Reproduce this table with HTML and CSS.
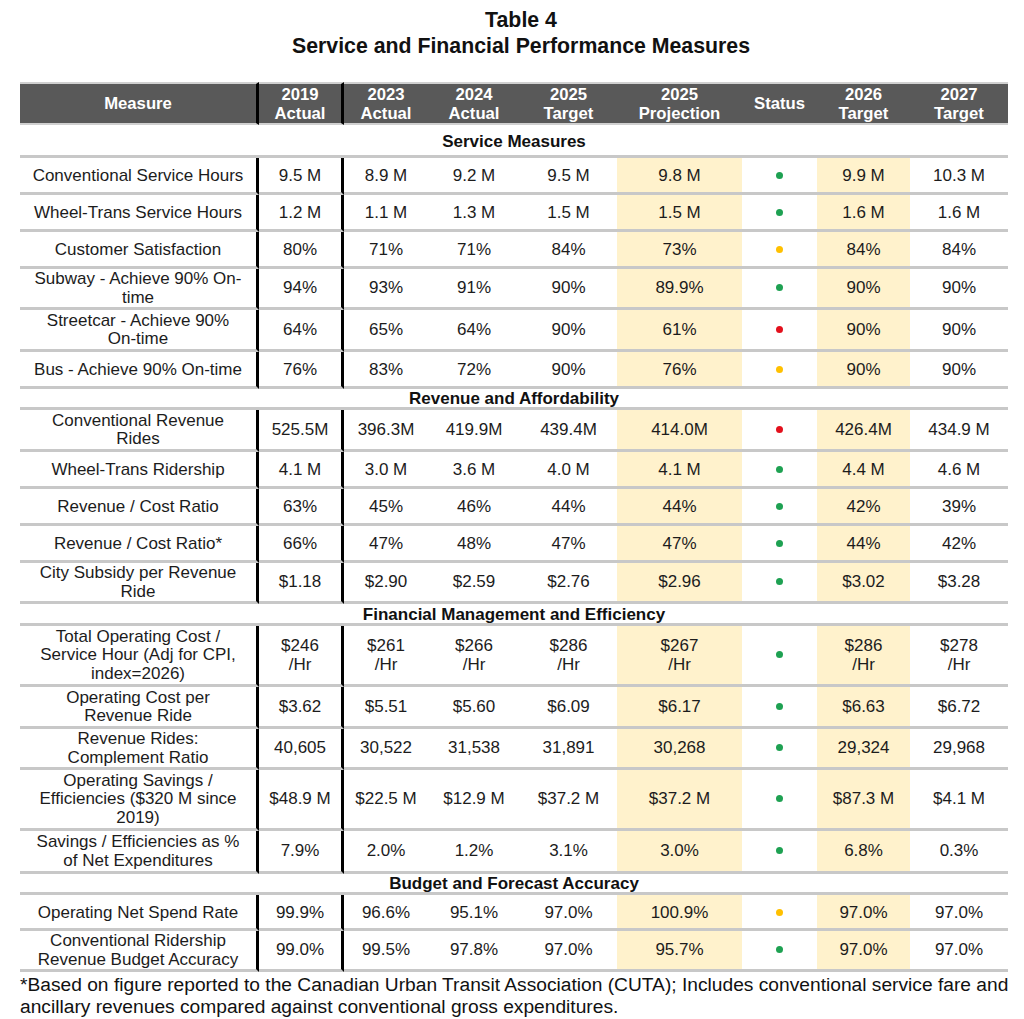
FILE: index.html
```html
<!DOCTYPE html>
<html>
<head>
<meta charset="utf-8">
<title>Table 4</title>
<link rel="stylesheet" href="styles.css">
</head>
<body>
<div class="page">
  <h1 class="title">Table 4<br>Service and Financial Performance Measures</h1>
  <table class="perf">
    <colgroup>
      <col class="w-measure"><col class="w-2019"><col class="w-2023"><col class="w-2024"><col class="w-2025t"><col class="w-proj"><col class="w-status"><col class="w-2026"><col class="w-2027">
    </colgroup>
    <thead>
      <tr>
        <th class="vb">Measure</th>
        <th class="vb">2019<br>Actual</th>
        <th>2023<br>Actual</th>
        <th>2024<br>Actual</th>
        <th>2025<br>Target</th>
        <th>2025<br>Projection</th>
        <th>Status</th>
        <th>2026<br>Target</th>
        <th>2027<br>Target</th>
      </tr>
    </thead>
    <tbody>
      <tr class="sec sec-first"><td colspan="9">Service Measures</td></tr>
      <tr class="h37"><td class="vb">Conventional Service Hours</td><td class="vb">9.5 M</td><td>8.9 M</td><td>9.2 M</td><td>9.5 M</td><td class="hl">9.8 M</td><td><span class="dot g"></span></td><td class="hl">9.9 M</td><td>10.3 M</td></tr>
      <tr class="h37"><td class="vb">Wheel-Trans Service Hours</td><td class="vb">1.2 M</td><td>1.1 M</td><td>1.3 M</td><td>1.5 M</td><td class="hl">1.5 M</td><td><span class="dot g"></span></td><td class="hl">1.6 M</td><td>1.6 M</td></tr>
      <tr class="h37"><td class="vb">Customer Satisfaction</td><td class="vb">80%</td><td>71%</td><td>71%</td><td>84%</td><td class="hl">73%</td><td><span class="dot y"></span></td><td class="hl">84%</td><td>84%</td></tr>
      <tr class="h40"><td class="vb">Subway - Achieve 90% On-<br>time</td><td class="vb">94%</td><td>93%</td><td>91%</td><td>90%</td><td class="hl">89.9%</td><td><span class="dot g"></span></td><td class="hl">90%</td><td>90%</td></tr>
      <tr class="h42"><td class="vb">Streetcar - Achieve 90%<br>On-time</td><td class="vb">64%</td><td>65%</td><td>64%</td><td>90%</td><td class="hl">61%</td><td><span class="dot r"></span></td><td class="hl">90%</td><td>90%</td></tr>
      <tr class="h37"><td class="vb">Bus - Achieve 90% On-time</td><td class="vb">76%</td><td>83%</td><td>72%</td><td>90%</td><td class="hl">76%</td><td><span class="dot y"></span></td><td class="hl">90%</td><td>90%</td></tr>
      <tr class="sec"><td colspan="9">Revenue and Affordability</td></tr>
      <tr class="h42"><td class="vb">Conventional Revenue<br>Rides</td><td class="vb">525.5M</td><td>396.3M</td><td>419.9M</td><td>439.4M</td><td class="hl">414.0M</td><td><span class="dot r"></span></td><td class="hl">426.4M</td><td>434.9 M</td></tr>
      <tr class="h37"><td class="vb">Wheel-Trans Ridership</td><td class="vb">4.1 M</td><td>3.0 M</td><td>3.6 M</td><td>4.0 M</td><td class="hl">4.1 M</td><td><span class="dot g"></span></td><td class="hl">4.4 M</td><td>4.6 M</td></tr>
      <tr class="h37"><td class="vb">Revenue / Cost Ratio</td><td class="vb">63%</td><td>45%</td><td>46%</td><td>44%</td><td class="hl">44%</td><td><span class="dot g"></span></td><td class="hl">42%</td><td>39%</td></tr>
      <tr class="h37"><td class="vb">Revenue / Cost Ratio*</td><td class="vb">66%</td><td>47%</td><td>48%</td><td>47%</td><td class="hl">47%</td><td><span class="dot g"></span></td><td class="hl">44%</td><td>42%</td></tr>
      <tr class="h41"><td class="vb">City Subsidy per Revenue<br>Ride</td><td class="vb">$1.18</td><td>$2.90</td><td>$2.59</td><td>$2.76</td><td class="hl">$2.96</td><td><span class="dot g"></span></td><td class="hl">$3.02</td><td>$3.28</td></tr>
      <tr class="sec sec-22"><td colspan="9">Financial Management and Efficiency</td></tr>
      <tr class="h61"><td class="vb">Total Operating Cost /<br>Service Hour (Adj for CPI,<br>index=2026)</td><td class="vb">$246<br>/Hr</td><td>$261<br>/Hr</td><td>$266<br>/Hr</td><td>$286<br>/Hr</td><td class="hl">$267<br>/Hr</td><td><span class="dot g"></span></td><td class="hl">$286<br>/Hr</td><td>$278<br>/Hr</td></tr>
      <tr class="h42"><td class="vb">Operating Cost per<br>Revenue Ride</td><td class="vb">$3.62</td><td>$5.51</td><td>$5.60</td><td>$6.09</td><td class="hl">$6.17</td><td><span class="dot g"></span></td><td class="hl">$6.63</td><td>$6.72</td></tr>
      <tr class="h41"><td class="vb">Revenue Rides:<br>Complement Ratio</td><td class="vb">40,605</td><td>30,522</td><td>31,538</td><td>31,891</td><td class="hl">30,268</td><td><span class="dot g"></span></td><td class="hl">29,324</td><td>29,968</td></tr>
      <tr class="h61"><td class="vb">Operating Savings /<br>Efficiencies ($320 M since<br>2019)</td><td class="vb">$48.9 M</td><td>$22.5 M</td><td>$12.9 M</td><td>$37.2 M</td><td class="hl">$37.2 M</td><td><span class="dot g"></span></td><td class="hl">$87.3 M</td><td>$4.1 M</td></tr>
      <tr class="h43"><td class="vb">Savings / Efficiencies as %<br>of Net Expenditures</td><td class="vb">7.9%</td><td>2.0%</td><td>1.2%</td><td>3.1%</td><td class="hl">3.0%</td><td><span class="dot g"></span></td><td class="hl">6.8%</td><td>0.3%</td></tr>
      <tr class="sec"><td colspan="9">Budget and Forecast Accuracy</td></tr>
      <tr class="h36"><td class="vb">Operating Net Spend Rate</td><td class="vb">99.9%</td><td>96.6%</td><td>95.1%</td><td>97.0%</td><td class="hl">100.9%</td><td><span class="dot y"></span></td><td class="hl">97.0%</td><td>97.0%</td></tr>
      <tr class="h41"><td class="vb">Conventional Ridership<br>Revenue Budget Accuracy</td><td class="vb">99.0%</td><td>99.5%</td><td>97.8%</td><td>97.0%</td><td class="hl">95.7%</td><td><span class="dot g"></span></td><td class="hl">97.0%</td><td>97.0%</td></tr>
    </tbody>
  </table>
  <p class="note">*Based on figure reported to the Canadian Urban Transit Association (CUTA); Includes conventional service fare and ancillary revenues compared against conventional gross expenditures.</p>
</div>
</body>
</html>
```
FILE: styles.css
```css
html, body {
  margin: 0;
  padding: 0;
  background: #ffffff;
}

.page {
  width: 1024px;
  font-family: "Liberation Sans", Arial, sans-serif;
  color: #1c1c1c;
}

.title {
  margin: 0;
  padding: 7px 0 0 18px;
  height: 75px;
  font-size: 21.3px;
  line-height: 26px;
  font-weight: bold;
  text-align: center;
  color: #111;
}

.perf {
  margin-left: 20px;
  width: 988px;
  table-layout: fixed;
  border-collapse: separate;
  border-spacing: 0;
  font-size: 17px;
  line-height: 18.5px;
}

.w-measure { width: 239px; }
.w-2019 { width: 85px; }
.w-2023 { width: 84px; }
.w-2024 { width: 92px; }
.w-2025t { width: 97px; }
.w-proj { width: 125px; }
.w-status { width: 75px; }
.w-2026 { width: 93px; }
.w-2027 { width: 98px; }

.perf th,
.perf td {
  box-sizing: border-box;
  padding: 0;
  text-align: center;
  vertical-align: middle;
}

.perf th {
  height: 43px;
  background: #595959;
  color: #ffffff;
  font-size: 16.7px;
  line-height: 19px;
  font-weight: bold;
  border-top: 2px solid #d0d0d0;
  border-bottom: 2px solid #d0d0d0;
}

.perf td {
  border-bottom: 3px solid #c8c8c8;
  padding-top: 1px;
}

.perf .vb {
  border-right: 3px solid #000000;
}

.perf td.hl {
  background: #fff2cc;
}

.sec td {
  height: 21px;
  line-height: 17px;
  font-weight: bold;
  color: #111;
}

.sec-first td { height: 33px; padding-top: 2px; }
.sec-22 td { height: 22px; }

.h36 td { height: 36px; padding-top: 3px; }
.h37 td { height: 37px; padding-top: 3px; }
.h40 td { height: 40px; }
.h41 td { height: 41px; }
.h42 td { height: 42px; }
.h43 td { height: 43px; }
.h61 td { height: 61px; }

.dot {
  display: inline-block;
  width: 7px;
  height: 7px;
  border-radius: 50%;
  vertical-align: middle;
  position: relative;
  top: -1px;
}
.dot.g { background: #1ea152; }
.dot.y { background: #ffc000; }
.dot.r { background: #e3101c; }

.note {
  margin: 2px 0 0 20px;
  width: 1000px;
  font-size: 19.2px;
  line-height: 22px;
  color: #111;
}
```
